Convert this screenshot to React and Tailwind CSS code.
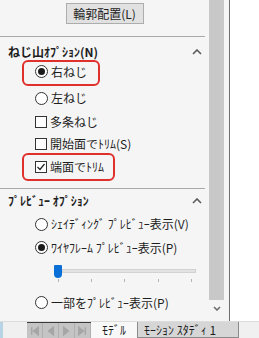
const FONT = { fontFamily: '"Noto Sans CJK JP", "Noto Sans", sans-serif' };

function Radio({ on }) {
  return (
    <span className="w-[13px] h-[13px] rounded-full border border-[#333] bg-white flex items-center justify-center shrink-0">
      {on && <span className="w-[7px] h-[7px] rounded-full bg-[#1a1a1a]" />}
    </span>
  );
}

function Check({ on }) {
  return (
    <span className="w-[12px] h-[12px] border border-[#333] bg-white flex items-center justify-center shrink-0">
      {on && (
        <svg width="10" height="10" viewBox="0 0 10 10">
          <path d="M1.5 5 L4 7.5 L8.5 2" fill="none" stroke="#222" strokeWidth="1.2" />
        </svg>
      )}
    </span>
  );
}

function ChevronUp() {
  return (
    <svg width="10" height="6" viewBox="0 0 10 6">
      <path d="M1 5 L5 1 L9 5" fill="none" stroke="#5a5a5a" strokeWidth="1.6" />
    </svg>
  );
}

function Row({ h, children }) {
  return (
    <div className={`flex items-center gap-[3px] pl-[35px] ${h}`}>{children}</div>
  );
}

function NavBtn({ kind }) {
  const paths = {
    first: "M5 4 V12 M12 4 L7 8 L12 12 Z",
    prev: "M11 4 L6 8 L11 12 Z",
    next: "M5 4 L10 8 L5 12 Z",
    last: "M11 4 V12 M4 4 L9 8 L4 12 Z",
  };
  return (
    <div className="w-[16px] h-[16px] bg-[#c4c4c4] border-r border-[#b0b0b0] flex items-center justify-center">
      <svg width="16" height="16" viewBox="0 0 16 16">
        <path d={paths[kind]} fill="#a6a6a6" stroke="#a6a6a6" strokeWidth="1.5" />
      </svg>
    </div>
  );
}

export default function App() {
  return (
    <div className="w-[259px] h-[338px] flex flex-col bg-white text-[12px] text-[#1e1e1e] overflow-hidden" style={FONT}>
      <div className="flex h-[321px]">
        <div className="w-[230px] flex bg-[#f5f5f5] border-r border-[#6e6e6e]">
          <div className="w-[209px] flex flex-col">
            <div className="pt-[3px] flex justify-center">
              <div className="w-[78px] h-[21px] bg-[#e1e1e1] border border-[#adadad] flex items-center justify-center leading-none">
                輪郭配置(L)
              </div>
            </div>
            <div className="mt-[12px] h-px w-[205px] bg-[#a8a8a8]" />

            <div className="h-[23px] pt-[7px] pl-[8px] pr-[7px] flex justify-between items-start">
              <span className="font-bold leading-[16px]">ねじ山ｵﾌﾟｼｮﾝ(N)</span>
              <span className="pt-[5px]"><ChevronUp /></span>
            </div>

            <div className="ml-[22px] w-[78px] h-[26px] border-2 border-[#e0302c] rounded-[6px] flex items-center gap-[3px] pl-[11px] pb-[3px]">
              <Radio on />
              <span className="leading-none">右ねじ</span>
            </div>
            <Row h="h-[24px]">
              <Radio />
              <span className="leading-none">左ねじ</span>
            </Row>
            <Row h="h-[24px]">
              <Check />
              <span className="leading-none">多条ねじ</span>
            </Row>
            <Row h="h-[19px]">
              <Check />
              <span className="leading-none">開始面でﾄﾘﾑ(S)</span>
            </Row>
            <div className="ml-[22px] w-[93px] h-[28px] border-2 border-[#e0302c] rounded-[6px] flex items-center gap-[3px] pl-[11px] pb-[1px]">
              <Check on />
              <span className="leading-none">端面でﾄﾘﾑ</span>
            </div>

            <div className="mt-[7px] h-px w-[205px] bg-[#a8a8a8]" />
            <div className="h-[23px] pl-[8px] pr-[7px] flex justify-between items-center">
              <span className="font-bold leading-none">ﾌﾟﾚﾋﾞｭｰ ｵﾌﾟｼｮﾝ</span>
              <ChevronUp />
            </div>
            <Row h="h-[24px]">
              <Radio />
              <span className="leading-none">ｼｪｲﾃﾞｨﾝｸﾞ ﾌﾟﾚﾋﾞｭｰ表示(V)</span>
            </Row>
            <Row h="h-[23px]">
              <Radio on />
              <span className="leading-none">ﾜｲﾔﾌﾚｰﾑ ﾌﾟﾚﾋﾞｭｰ表示(P)</span>
            </Row>

            <div className="h-[32px] pt-[6px] pl-[54px] flex flex-col">
              <div className="flex items-start h-[13px]">
                <div className="w-[8px] h-[13px] bg-[#0a6fd6] rounded-b-[4px] rounded-t-[1px]" />
                <div className="mt-[4px] w-[134px] h-[4px] bg-[#e3e3e3] border border-[#d2d2d2]" />
              </div>
              <div className="mt-[1px] h-[3px] w-[138px] flex justify-between pl-[3.5px]">
                {[0, 1, 2, 3, 4].map((i) => (
                  <span key={i} className="w-px h-[3px] bg-[#b4b4b4]" />
                ))}
              </div>
            </div>

            <Row h="h-[23px]">
              <Radio />
              <span className="leading-none">一部をﾌﾟﾚﾋﾞｭｰ表示(P)</span>
            </Row>
          </div>

          <div className="w-[20px] flex flex-col">
            <div className="w-[15px] h-[300px] bg-[#c8c8c8]" />
            <div className="w-[15px] flex justify-center pt-[6px]">
              <svg width="8" height="5" viewBox="0 0 8 5">
                <path d="M1 1 L4 4 L7 1" fill="none" stroke="#6a6a6a" strokeWidth="1.5" />
              </svg>
            </div>
          </div>
        </div>
        <div className="flex-1 bg-white" />
      </div>

      <div className="h-[17px] flex bg-[#f0f0f0] border-t border-[#dcdcdc]">
        <div className="w-[3px] bg-[#b8d3e6]" />
        <div className="w-[24px]" />
        <div className="flex border-t border-[#3a3a3a] bg-[#c4c4c4]">
          <NavBtn kind="first" />
          <NavBtn kind="prev" />
          <NavBtn kind="next" />
          <NavBtn kind="last" />
        </div>
        <div className="w-[46px] bg-[#f8f8f8] flex items-center justify-center leading-none">ﾓﾃﾞﾙ</div>
        <div className="w-[102px] bg-[#d6d6d6] border border-[#8a8a8a] border-t-0 flex items-center pl-[6px] leading-none">
          ﾓｰｼｮﾝ ｽﾀﾃﾞｨ 1
        </div>
      </div>
    </div>
  );
}
